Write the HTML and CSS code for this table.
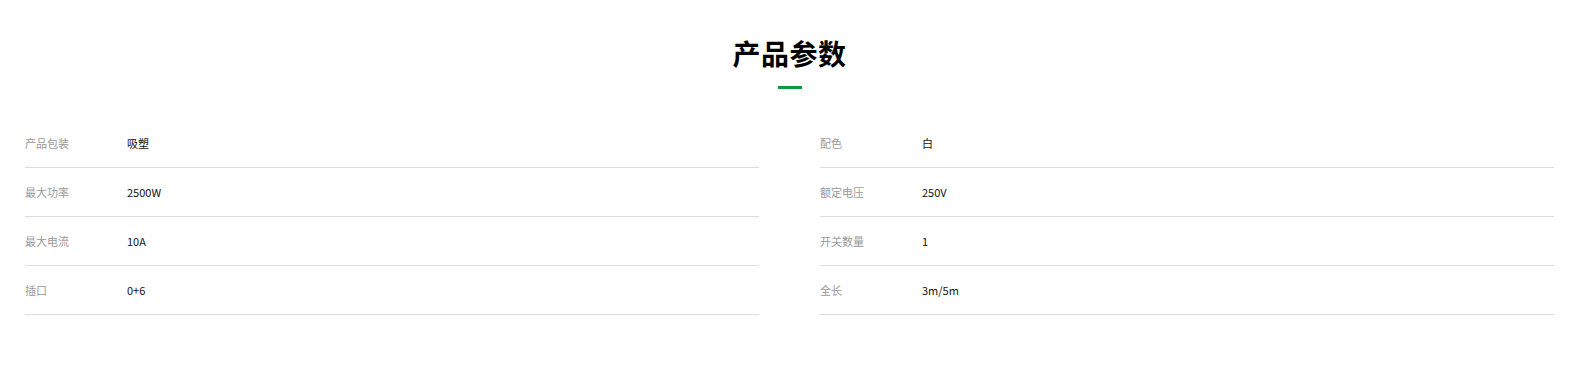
FILE: index.html
```html
<!DOCTYPE html>
<html lang="zh">
<head>
<meta charset="utf-8">
<title>产品参数</title>
<link rel="stylesheet" href="styles.css">
</head>
<body>
<section class="params">
  <div class="head">
    <h2 class="title">产品参数</h2>
    <span class="bar"></span>
  </div>
  <div class="grid">
    <div class="col">
      <div class="row"><span class="label">产品包装</span><span class="value">吸塑</span></div>
      <div class="row"><span class="label">最大功率</span><span class="value">2500W</span></div>
      <div class="row"><span class="label">最大电流</span><span class="value">10A</span></div>
      <div class="row"><span class="label">插口</span><span class="value">0+6</span></div>
    </div>
    <div class="col">
      <div class="row"><span class="label">配色</span><span class="value">白</span></div>
      <div class="row"><span class="label">额定电压</span><span class="value">250V</span></div>
      <div class="row"><span class="label">开关数量</span><span class="value">1</span></div>
      <div class="row"><span class="label">全长</span><span class="value">3m/5m</span></div>
    </div>
  </div>
</section>
</body>
</html>
```

FILE: styles.css
```css
html, body {
  margin: 0;
  padding: 0;
  background: #fff;
}
body {
  font-family: "Noto Sans CJK SC", "Noto Sans", sans-serif;
  color: #000;
}
.params {
  padding: 33px 22px 0 25px;
}
.head {
  display: flex;
  flex-direction: column;
  align-items: center;
}
.title {
  margin: 0;
  font-size: 28px;
  line-height: 40px;
  font-weight: 700;
  color: #000;
  letter-spacing: 0.5px;
}
.bar {
  display: block;
  width: 24px;
  height: 3px;
  background: #0b9a3e;
  margin-top: 13px;
}
.grid {
  display: grid;
  grid-template-columns: 734px 734px;
  column-gap: 61px;
  margin-top: 30px;
}
.row {
  display: flex;
  align-items: center;
  height: 48px;
  border-bottom: 1px solid #dcdcdc;
  font-size: 11px;
}
.label {
  width: 102px;
  flex: none;
  color: #999;
}
.value {
  color: #111;
}
```
